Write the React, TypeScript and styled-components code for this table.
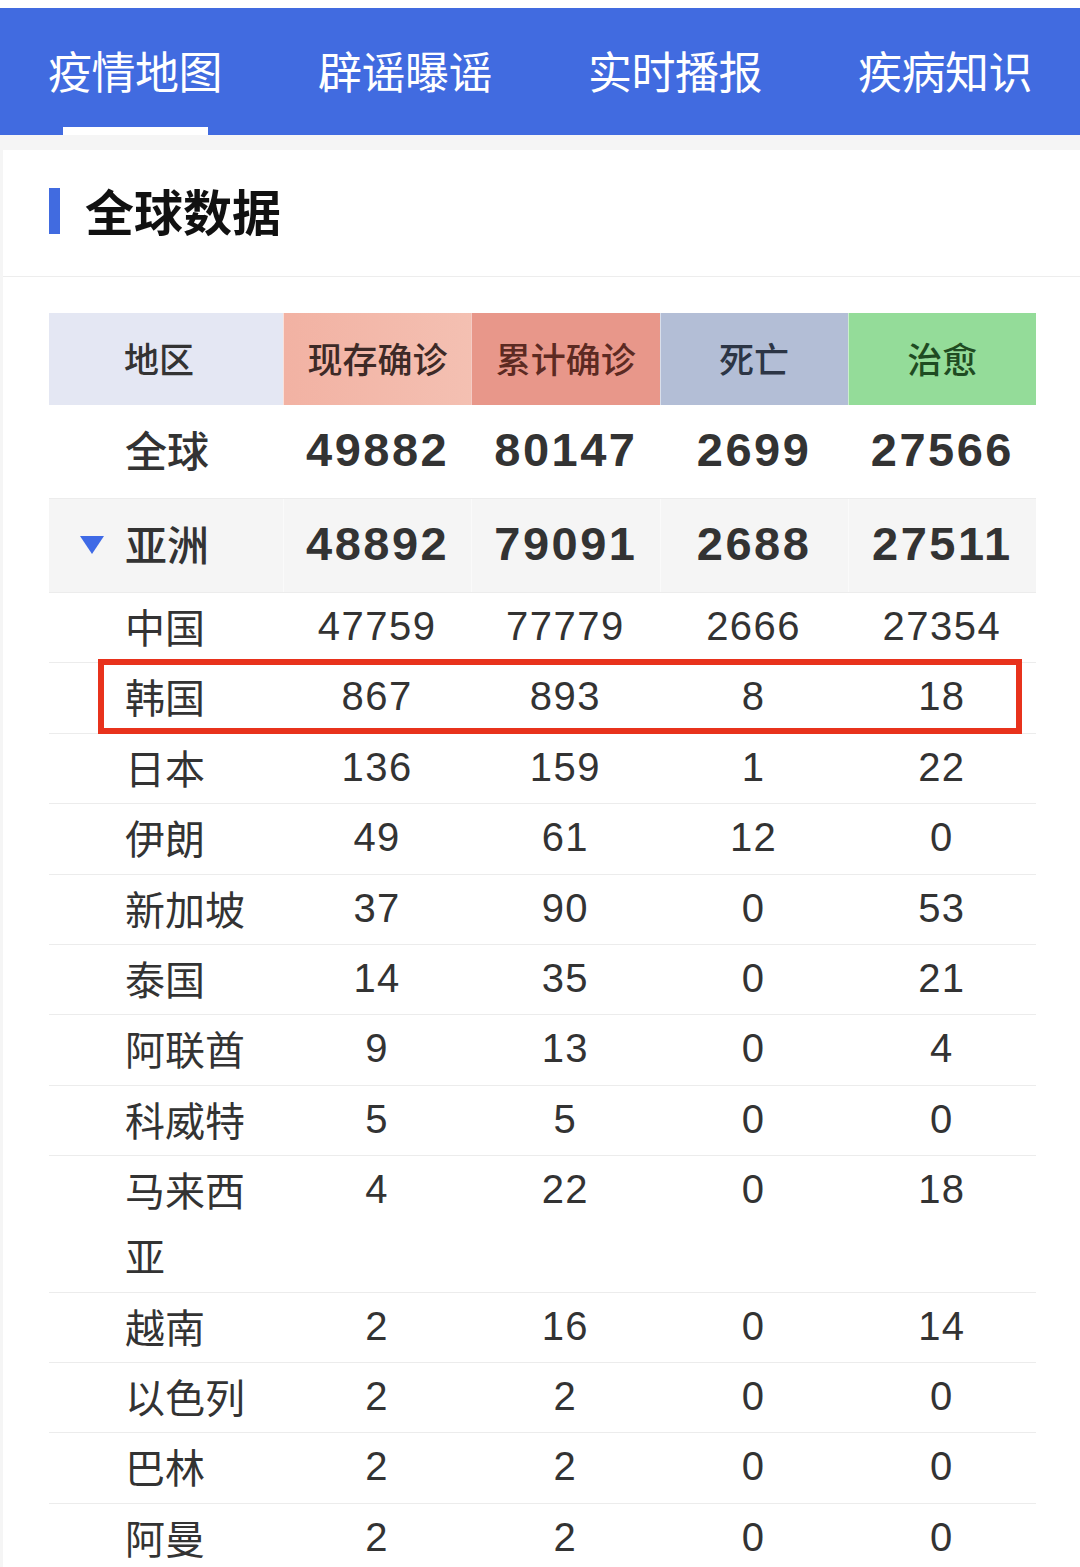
import React from 'react';
import styled, { createGlobalStyle } from 'styled-components';

const GlobalStyle = createGlobalStyle`
  html, body {
    margin: 0;
    padding: 0;
    background: #f5f5f5;
    font-family: "Liberation Sans", "Noto Sans CJK SC", sans-serif;
    color: #333;
  }
`;

type Row = {
  name: string;
  now: number;
  total: number;
  dead: number;
  cured: number;
  highlight?: boolean;
};

const countries: Row[] = [
  { name: '中国', now: 47759, total: 77779, dead: 2666, cured: 27354 },
  { name: '韩国', now: 867, total: 893, dead: 8, cured: 18, highlight: true },
  { name: '日本', now: 136, total: 159, dead: 1, cured: 22 },
  { name: '伊朗', now: 49, total: 61, dead: 12, cured: 0 },
  { name: '新加坡', now: 37, total: 90, dead: 0, cured: 53 },
  { name: '泰国', now: 14, total: 35, dead: 0, cured: 21 },
  { name: '阿联酋', now: 9, total: 13, dead: 0, cured: 4 },
  { name: '科威特', now: 5, total: 5, dead: 0, cured: 0 },
  { name: '马来西亚', now: 4, total: 22, dead: 0, cured: 18 },
  { name: '越南', now: 2, total: 16, dead: 0, cured: 14 },
  { name: '以色列', now: 2, total: 2, dead: 0, cured: 0 },
  { name: '巴林', now: 2, total: 2, dead: 0, cured: 0 },
  { name: '阿曼', now: 2, total: 2, dead: 0, cured: 0 },
];

const tabs = ['疫情地图', '辟谣曝谣', '实时播报', '疾病知识'];

const Page = styled.div`
  padding-top: 8px;
  background: #fff;
`;

const TabBar = styled.nav`
  display: grid;
  grid-template-columns: repeat(4, 1fr);
  height: 127px;
  background: #416be0;
`;

const Tab = styled.div<{ $active?: boolean }>`
  position: relative;
  display: flex;
  align-items: center;
  justify-content: center;
  padding-bottom: 3px;
  color: #fff;
  font-size: 44px;
  font-family: "Noto Sans CJK SC", sans-serif;
  letter-spacing: -0.5px;

  &::after {
    content: '';
    display: ${p => (p.$active ? 'block' : 'none')};
    position: absolute;
    bottom: 0;
    left: 50%;
    width: 145px;
    margin-left: -72px;
    height: 8px;
    background: #fff;
  }
`;

const Body = styled.div`
  background: #f5f5f5;
  padding-top: 15px;
`;

const Card = styled.div`
  margin-left: 3px;
  background: #fff;
`;

const TitleBar = styled.div`
  display: flex;
  align-items: center;
  gap: 25px;
  height: 126px;
  padding-left: 46px;
  border-bottom: 1px solid #ededed;
`;

const Marker = styled.span`
  width: 11px;
  height: 46px;
  margin-top: -4px;
  background: #416be0;
`;

const Title = styled.h2`
  margin: 0 0 8px;
  font-size: 49px;
  font-weight: 700;
  color: #111;
  font-family: "Noto Sans CJK SC", sans-serif;
`;

const TableWrap = styled.div`
  padding: 36px 44px 0 46px;
`;

const Grid = styled.div`
  display: grid;
  grid-template-columns: 234px repeat(4, 1fr);
`;

const HeadCell = styled.div<{ $bg: string; $fg: string }>`
  display: flex;
  align-items: center;
  justify-content: center;
  height: 92px;
  padding-bottom: 4px;
  box-sizing: border-box;
  background: ${p => p.$bg};
  color: ${p => p.$fg};
  font-size: 35px;
  font-weight: 500;
  font-family: "Noto Sans CJK SC", sans-serif;
  border-left: 1px solid rgba(255, 255, 255, 0.5);

  &:first-child {
    border-left: none;
    padding-right: 14px;
  }
`;

const SumRow = styled(Grid)<{ $shade?: boolean }>`
  height: 93px;
  align-items: stretch;
  background: ${p => (p.$shade ? '#f5f5f5' : '#fff')};
  border-bottom: 1px solid #ececec;
`;

const SumName = styled.div`
  position: relative;
  display: flex;
  align-items: center;
  padding-left: 76px;
  padding-bottom: 6px;
  font-size: 42px;
  font-weight: 500;
  font-family: "Noto Sans CJK SC", sans-serif;
  color: #333;
`;

const Caret = styled.svg`
  position: absolute;
  left: 31px;
  top: 50%;
  margin-top: -10px;
`;

const SumNum = styled.div<{ $shade?: boolean }>`
  display: flex;
  align-items: center;
  justify-content: center;
  padding-bottom: 5px;
  font-size: 47px;
  font-weight: 700;
  letter-spacing: 2.5px;
  color: #333;
  border-left: 1px solid ${p => (p.$shade ? '#fafafa' : 'transparent')};
`;

const CountryRow = styled(Grid)`
  position: relative;
  align-items: start;
  border-bottom: 1px solid #ececec;
`;

const CountryName = styled.div`
  padding: 0 0 3.4px 76px;
  font-size: 40px;
  line-height: 66px;
  font-family: "Noto Sans CJK SC", sans-serif;
  color: #333;
`;

const Num = styled.div`
  padding-bottom: 3.4px;
  text-align: center;
  font-size: 40px;
  line-height: 66px;
  letter-spacing: 1.5px;
  color: #333;
`;

const Highlight = styled.div`
  position: absolute;
  left: 49px;
  right: 14px;
  top: -4px;
  bottom: -1px;
  border: 6px solid #e8321c;
  pointer-events: none;
`;

export default function App() {
  return (
    <Page>
      <GlobalStyle />
      <TabBar>
        {tabs.map((t, i) => (
          <Tab key={t} $active={i === 0}>{t}</Tab>
        ))}
      </TabBar>
      <Body>
        <Card>
          <TitleBar>
            <Marker />
            <Title>全球数据</Title>
          </TitleBar>
          <TableWrap>
            <Grid>
              <HeadCell $bg="#e4e7f3" $fg="#333">地区</HeadCell>
              <HeadCell $bg="linear-gradient(90deg, #f2b2a3, #f4c0b2)" $fg="#3d2a27">现存确诊</HeadCell>
              <HeadCell $bg="#e8978a" $fg="#5c2a22">累计确诊</HeadCell>
              <HeadCell $bg="#b3bed6" $fg="#2c3545">死亡</HeadCell>
              <HeadCell $bg="#94dc99" $fg="#1f4b22">治愈</HeadCell>
            </Grid>
            <SumRow>
              <SumName>全球</SumName>
              <SumNum>49882</SumNum>
              <SumNum>80147</SumNum>
              <SumNum>2699</SumNum>
              <SumNum>27566</SumNum>
            </SumRow>
            <SumRow $shade>
              <SumName>
                <Caret width="24" height="18" viewBox="0 0 24 18">
                  <path d="M0 0 H24 L12 18 Z" fill="#3f6ae6" />
                </Caret>
                亚洲
              </SumName>
              <SumNum $shade>48892</SumNum>
              <SumNum $shade>79091</SumNum>
              <SumNum $shade>2688</SumNum>
              <SumNum $shade>27511</SumNum>
            </SumRow>
            {countries.map(c => (
              <CountryRow key={c.name}>
                <CountryName>{c.name}</CountryName>
                <Num>{c.now}</Num>
                <Num>{c.total}</Num>
                <Num>{c.dead}</Num>
                <Num>{c.cured}</Num>
                {c.highlight && <Highlight />}
              </CountryRow>
            ))}
          </TableWrap>
        </Card>
      </Body>
    </Page>
  );
}
